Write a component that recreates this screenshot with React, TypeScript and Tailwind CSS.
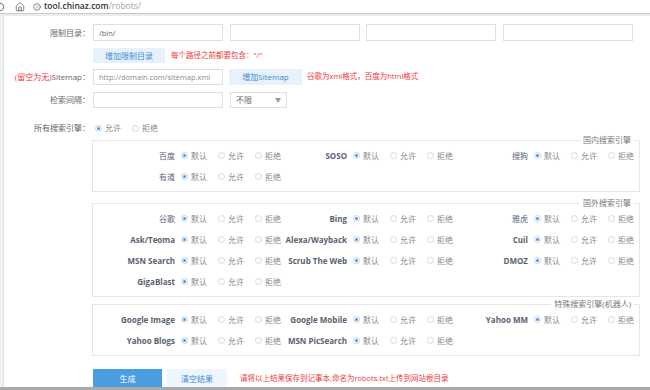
import { RotateCw, House, Info } from "lucide-react";

type Row = (string | null)[];

const domestic: Row[] = [
  ["百度", "SOSO", "搜狗"],
  ["有道", null, null],
];

const foreign: Row[] = [
  ["谷歌", "Bing", "雅虎"],
  ["Ask/Teoma", "Alexa/Wayback", "Cuil"],
  ["MSN Search", "Scrub The Web", "DMOZ"],
  ["GigaBlast", null, null],
];

const special: Row[] = [
  ["Google Image", "Google Mobile", "Yahoo MM"],
  ["Yahoo Blogs", "MSN PicSearch", null],
];

function Radio({ label, checked, fixed = true }: { label: string; checked?: boolean; fixed?: boolean }) {
  return (
    <span className={`inline-flex shrink-0 items-center whitespace-nowrap ${fixed ? "w-[37px]" : ""}`}>
      <span
        className={`flex h-[7px] w-[7px] shrink-0 items-center justify-center rounded-full border ${
          checked ? "border-[#bcd5ee]" : "border-[#d9d9d9]"
        }`}
      >
        {checked && <span className="h-[3px] w-[3px] rounded-full bg-[#4a92da]" />}
      </span>
      <span className="ml-[3px] text-[#888]">{label}</span>
    </span>
  );
}

function EngineCell({ name }: { name: string | null }) {
  if (!name) return <div />;
  const latin = /^[A-Za-z]/.test(name);
  return (
    <div className="flex items-center">
      <span
        className={`flex-1 whitespace-nowrap pr-[6px] text-right ${
          latin ? "font-bold text-[#596272]" : "text-[#5b6577]"
        }`}
      >
        {name}
      </span>
      <div className="flex w-[97px] shrink-0 items-center">
        <Radio label="默认" checked />
        <Radio label="允许" />
        <Radio label="拒绝" fixed={false} />
      </div>
    </div>
  );
}

function EngineGroup({ title, rows, className }: { title: string; rows: Row[]; className: string }) {
  return (
    <fieldset className={`ml-[88px] w-[548px] border border-[#e6e6e6] pb-[4px] ${className}`}>
      <legend className="ml-auto mr-[5px] px-[3px] text-[8px] leading-[10px] text-[#777]">{title}</legend>
      {rows.map((row, i) => (
        <div key={i} className="grid h-[21px] grid-cols-[185px_172px_181px] items-center">
          {row.map((name, j) => (
            <EngineCell key={j} name={name} />
          ))}
        </div>
      ))}
    </fieldset>
  );
}

function Label({ children }: { children: React.ReactNode }) {
  return <div className="w-[89px] shrink-0 whitespace-nowrap pr-[3px] text-right text-[#666]">{children}</div>;
}

const inputCls =
  "h-full w-[130px] border border-[#dfdfdf] bg-white px-[5px] text-[7.5px] text-[#666] outline-none placeholder:text-[#8a8a8a]";

export default function App() {
  return (
    <div className="flex h-[390px] w-[650px] flex-col overflow-hidden bg-white font-[Open_Sans,Noto_Sans_CJK_SC,sans-serif] text-[8px] leading-none">
      {/* browser bar */}
      <div className="flex h-[13px] items-center text-[#555]">
        <RotateCw className="-ml-[5px] h-[10px] w-[10px] -scale-x-100" strokeWidth={2} />
        <House className="ml-[10px] h-[10px] w-[10px]" strokeWidth={1.8} />
        <Info className="ml-[8px] h-[8px] w-[8px]" strokeWidth={2} />
        <span className="ml-[3px] text-[8.5px] font-semibold text-[#333]">
          tool.chinaz.com<span className="font-normal text-[#a0a0a0]">/robots/</span>
        </span>
      </div>
      <div className="h-[1px] bg-[#c9c9c9]" />
      <div className="h-[2px] bg-[#ececec]" />

      <div className="flex min-h-0 flex-1">
        <div className="w-[4px] shrink-0 border-r border-[#e3e3e3] bg-[#f2f2f2]" />
        <div className="flex-1">
          <div className="mt-[8px] flex h-[17px] items-center">
            <Label>限制目录：</Label>
            <div className="flex h-full gap-[6.5px]">
              <input className={inputCls} defaultValue="/bin/" readOnly />
              <input className={inputCls} readOnly />
              <input className={inputCls} readOnly />
              <input className={inputCls} readOnly />
            </div>
          </div>

          <div className="mt-[7px] flex h-[15px] items-center pl-[89px]">
            <button className="h-full w-[72px] bg-[#e7f1fb] text-[8px] text-[#3f8ad4]">增加限制目录</button>
            <span className="ml-[6px] text-[7.5px] text-[#f0393c]">每个路径之前都要包含："/"</span>
          </div>

          <div className="mt-[6px] flex h-[16px] items-center">
            <Label>
              <span className="text-[#f0393c]">(留空为无)</span>Sitemap：
            </Label>
            <input className={inputCls} placeholder="http://domain.com/sitemap.xml" readOnly />
            <button className="ml-[6px] h-full w-[73px] bg-[#e7f1fb] text-[8px] text-[#3f8ad4]">增加Sitemap</button>
            <span className="ml-[5px] text-[7.5px] text-[#f0393c]">谷歌为xml格式，百度为html格式</span>
          </div>

          <div className="mt-[7px] flex h-[16px] items-center">
            <Label>检索间隔：</Label>
            <input className={inputCls} readOnly />
            <div className="ml-[7px] flex h-full w-[57px] items-center justify-between border border-[#dfdfdf] px-[5px] text-[#666]">
              <span>不限</span>
              <span className="text-[6px] text-[#999]">▼</span>
            </div>
          </div>

          <div className="mt-[13px] flex h-[14px] items-center">
            <Label>所有搜索引擎：</Label>
            <div className="flex items-center pl-[2px]">
              <Radio label="允许" checked />
              <Radio label="拒绝" fixed={false} />
            </div>
          </div>

          <EngineGroup title="国内搜索引擎" rows={domestic} className="mt-0" />
          <EngineGroup title="国外搜索引擎" rows={foreign} className="mt-[6px]" />
          <EngineGroup title="特殊搜索引擎(机器人)" rows={special} className="mt-[2px]" />

          <div className="mt-[13px] flex h-[20px] items-center pl-[89px]">
            <button className="h-full w-[69px] bg-[#4b9de2] text-[8px] text-white">生成</button>
            <button className="ml-[5px] h-full w-[60px] bg-[#edf5fd] text-[8px] text-[#3f8ad4]">清空结果</button>
            <span className="ml-[13px] text-[7.5px] text-[#f0393c]">请将以上结果保存到记事本,命名为robots.txt上传到网站根目录</span>
          </div>
        </div>
      </div>
      <div className="h-[3px] shrink-0 bg-[#a9a9a9]" />
    </div>
  );
}
